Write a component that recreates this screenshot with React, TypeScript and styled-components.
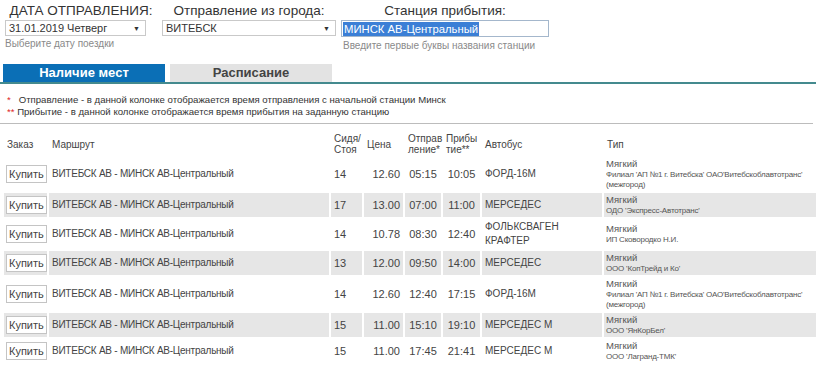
import styled, { createGlobalStyle } from 'styled-components';

type Trip = {
  seats: string;
  price: string;
  departure: string;
  arrival: string;
  bus: string;
  carrier: string;
};

const route = 'ВИТЕБСК АВ - МИНСК АВ-Центральный';
const vitebskCarrier = "Филиал 'АП №1 г. Витебска' ОАО'Витебскоблавтотранс'\n(межгород)";

const trips: Trip[] = [
  { seats: '14', price: '12.60', departure: '05:15', arrival: '10:05', bus: 'ФОРД-16М', carrier: vitebskCarrier },
  { seats: '17', price: '13.00', departure: '07:00', arrival: '11:00', bus: 'МЕРСЕДЕС', carrier: "ОДО 'Экспресс-Автотранс'" },
  { seats: '14', price: '10.78', departure: '08:30', arrival: '12:40', bus: 'ФОЛЬКСВАГЕН КРАФТЕР', carrier: 'ИП Сковородко Н.И.' },
  { seats: '13', price: '12.00', departure: '09:50', arrival: '14:00', bus: 'МЕРСЕДЕС', carrier: "ООО 'КопТрейд и Ко'" },
  { seats: '14', price: '12.60', departure: '12:40', arrival: '17:15', bus: 'ФОРД-16М', carrier: vitebskCarrier },
  { seats: '15', price: '11.00', departure: '15:10', arrival: '19:10', bus: 'МЕРСЕДЕС М', carrier: "ООО 'ЯнКорБел'" },
  { seats: '15', price: '11.00', departure: '17:45', arrival: '21:41', bus: 'МЕРСЕДЕС М', carrier: "ООО 'Лагранд-ТМК'" },
];

const GlobalStyle = createGlobalStyle`
  body {
    margin: 0;
    background: #fff;
    font-family: "Liberation Sans", Arial, sans-serif;
    color: #444;
  }
`;

const App = () => {
  return (
    <>
      <GlobalStyle />
      <Page>
        <Filters>
          <FilterColumn $width={152}>
            <Label>{'ДАТА ОТПРАВЛЕНИЯ:'}</Label>
            <SelectBox $width={141}>
              <span>{'31.01.2019 Четверг'}</span>
              <Caret>{'▼'}</Caret>
            </SelectBox>
            <Hint>{'Выберите дату поездки'}</Hint>
          </FilterColumn>
          <FilterColumn $width={174}>
            <Label>{'Отправление из города:'}</Label>
            <SelectBox $width={174}>
              <span>{'ВИТЕБСК'}</span>
              <Caret>{'▼'}</Caret>
            </SelectBox>
          </FilterColumn>
          <FilterColumn $width={208}>
            <Label>{'Станция прибытия:'}</Label>
            <StationInput>
              <Selected>{'МИНСК АВ-Центральный'}</Selected>
            </StationInput>
            <Hint $indent>{'Введите первые буквы названия станции'}</Hint>
          </FilterColumn>
        </Filters>

        <Tabs>
          <Tab $active>{'Наличие мест'}</Tab>
          <Tab>{'Расписание'}</Tab>
        </Tabs>

        <Notes>
          <Note>
            <Star>{'*'}</Star>
            {'   Отправление - в данной колонке отображается время отправления с начальной станции Минск'}
          </Note>
          <Note>
            <Star>{'**'}</Star>
            {' Прибытие - в данной колонке отображается время прибытия на заданную станцию'}
          </Note>
        </Notes>
        <Divider />

        <Table>
          <thead>
            <tr>
              <Th $width={43}>{'Заказ'}</Th>
              <Th $width={280}>{'Маршрут'}</Th>
              <Th $width={31}>
                {'Сидя/'}
                <br />
                {'Стоя'}
              </Th>
              <Th $width={39}>{'Цена'}</Th>
              <Th $width={36}>
                {'Отправ'}
                <br />
                {'ление*'}
              </Th>
              <Th $width={37}>
                {'Прибы'}
                <br />
                {'тие**'}
              </Th>
              <Th $width={120}>{'Автобус'}</Th>
              <Th>{'Тип'}</Th>
            </tr>
          </thead>
          <tbody>
            {trips.map((trip, index) => {
              const striped = index % 2 === 1;

              return (
                <tr key={`trip-${index}`}>
                  <Td $striped={striped} $pad="0 2px">
                    <BuyButton type="button">{'Купить'}</BuyButton>
                  </Td>
                  <Td $striped={striped} $tight>
                    {route}
                  </Td>
                  <Td $striped={striped} $numeric>
                    {trip.seats}
                  </Td>
                  <Td $striped={striped} $numeric $align="right">
                    {trip.price}
                  </Td>
                  <Td $striped={striped} $numeric $align="center">
                    {trip.departure}
                  </Td>
                  <Td $striped={striped} $numeric $align="center">
                    {trip.arrival}
                  </Td>
                  <Td $striped={striped}>{trip.bus}</Td>
                  <Td $striped={striped} $pad="1px 1px 1px 2px">
                    <SeatType>{'Мягкий'}</SeatType>
                    <Carrier>{trip.carrier}</Carrier>
                  </Td>
                </tr>
              );
            })}
          </tbody>
        </Table>
      </Page>
    </>
  );
};

const Page = styled.div`
  width: 820px;
`;

const Filters = styled.div`
  display: flex;
  padding: 2px 0 0 5px;
  height: 64px;
  box-sizing: border-box;
`;

const FilterColumn = styled.div<{ $width: number }>`
  width: ${({ $width }) => $width}px;
  display: flex;
  flex-direction: column;
  margin-right: 5px;
`;

const Label = styled.div`
  font-size: 13.5px;
  line-height: 18px;
  text-align: center;
  color: #333;
  white-space: nowrap;
`;

const SelectBox = styled.div<{ $width: number }>`
  width: ${({ $width }) => $width}px;
  height: 16px;
  box-sizing: border-box;
  border: 1px solid #c9c9c9;
  display: flex;
  align-items: center;
  justify-content: space-between;
  padding: 0 3px;
  font-size: 11px;
  color: #333;
  background: #fff;
`;

const Caret = styled.span`
  font-size: 7px;
  color: #333;
  margin-right: 2px;
`;

const StationInput = styled.div`
  width: 208px;
  height: 17px;
  box-sizing: border-box;
  border: 1px solid #a4b7cc;
  display: flex;
  align-items: center;
  padding: 0 1px;
  font-size: 11.3px;
  background: #fff;
`;

const Selected = styled.span`
  background: #3b7fd6;
  color: #fff;
  line-height: 14px;
  padding: 0 1px;
`;

const Hint = styled.div<{ $indent?: boolean }>`
  font-size: 10px;
  line-height: 13px;
  color: #8a8a8a;
  margin-top: ${({ $indent }) => ($indent ? '2px' : '1px')};
  padding-left: ${({ $indent }) => ($indent ? '2px' : '0')};
  white-space: nowrap;
`;

const Tabs = styled.div`
  display: flex;
  gap: 5px;
  padding-left: 3px;
  width: 813px;
  border-bottom: 2px solid #448a8e;
`;

const Tab = styled.div<{ $active?: boolean }>`
  width: 162px;
  height: 18px;
  line-height: 18px;
  text-align: center;
  font-size: 13px;
  font-weight: bold;
  background: ${({ $active }) => ($active ? '#0b6fb6' : '#e3e3e3')};
  color: ${({ $active }) => ($active ? '#fff' : '#444')};
`;

const Notes = styled.div`
  padding: 10px 0 0 7px;
`;

const Note = styled.div`
  font-size: 9.6px;
  line-height: 12px;
  white-space: pre;
  color: #333;
`;

const Star = styled.span`
  color: #d22;
`;

const Divider = styled.div`
  width: 813px;
  margin-top: 5px;
  border-top: 1px solid #bcbcbc;
`;

const Table = styled.table`
  width: 816px;
  margin: 7px 0 0 2px;
  table-layout: fixed;
  border-collapse: separate;
  border-spacing: 2px;
`;

const Th = styled.th<{ $width?: number }>`
  ${({ $width }) => ($width ? `width: ${$width}px;` : '')}
  box-sizing: border-box;
  padding: 0 1px 0 3px;
  font-size: 10px;
  line-height: 11px;
  font-weight: normal;
  text-align: left;
  vertical-align: middle;
  height: 22px;
  color: #444;
`;

const Td = styled.td<{
  $striped: boolean;
  $align?: string;
  $pad?: string;
  $numeric?: boolean;
  $tight?: boolean;
}>`
  box-sizing: border-box;
  padding: ${({ $pad }) => $pad || '1px 3px'};
  background: ${({ $striped }) => ($striped ? '#e6e6e6' : 'transparent')};
  text-align: ${({ $align }) => $align || 'left'};
  vertical-align: middle;
  font-size: ${({ $numeric }) => ($numeric ? '11px' : '10px')};
  letter-spacing: ${({ $tight }) => ($tight ? '-0.25px' : 'normal')};
  line-height: 14px;
  color: #444;
`;

const BuyButton = styled.button`
  display: block;
  height: 18px;
  padding: 0 2px;
  margin: 0;
  border: 1px solid #c4c4c4;
  background: #fff;
  font-family: "Liberation Sans", Arial, sans-serif;
  font-size: 11px;
  line-height: 16px;
  color: #444;
`;

const SeatType = styled.div`
  font-size: 9.5px;
  line-height: 12px;
  color: #555;
`;

const Carrier = styled.div`
  font-size: 8px;
  line-height: 10px;
  letter-spacing: -0.2px;
  white-space: pre;
  color: #555;
`;

export default App;
